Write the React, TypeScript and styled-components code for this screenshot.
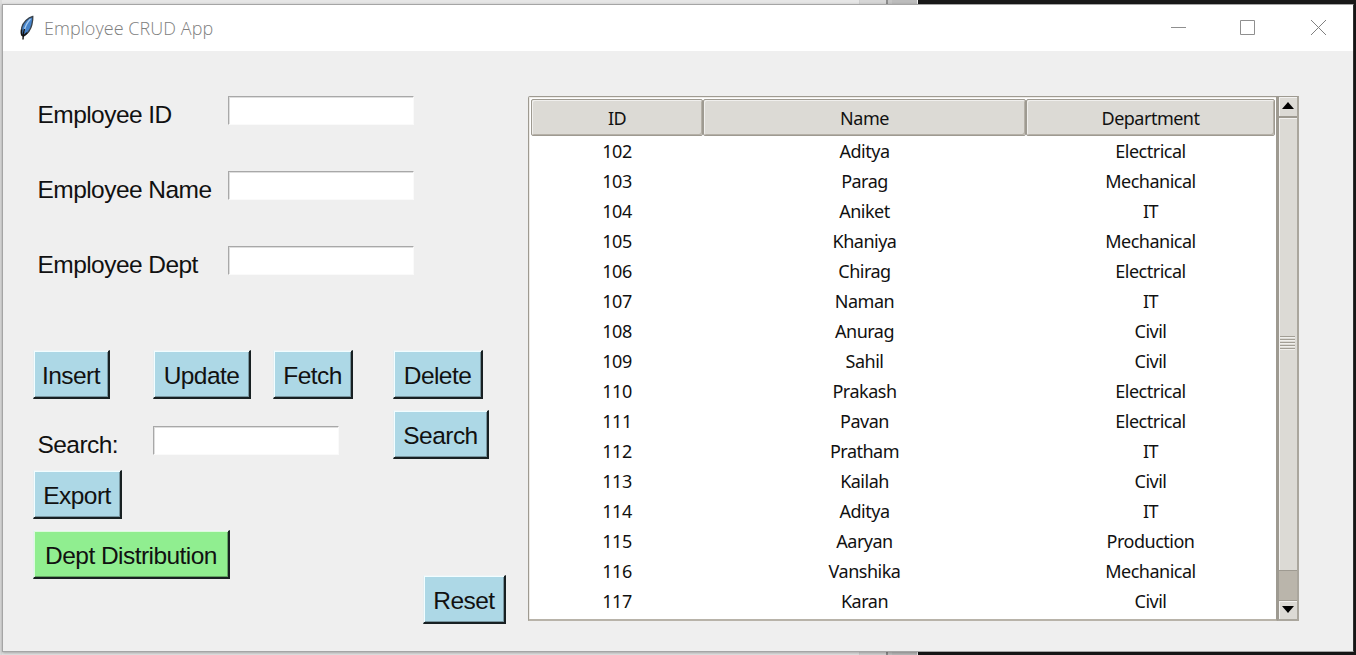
import React from 'react';
import styled, { createGlobalStyle } from 'styled-components';

const GlobalStyle = createGlobalStyle`
  * { box-sizing: border-box; }
  body { margin: 0; overflow: hidden; }
`;

const Desktop = styled.div`
  width: 1356px;
  height: 655px;
  padding: 4px 2px 3px;
  background: linear-gradient(
    90deg,
    #dcdcdc 0 2px, #e6e6e6 2px 859px, #cfcfcf 859px 860px, #d6d6d6 860px 886px,
    #8c8c8c 886px 888px, #c4c4c4 888px 892px, #bcbcbc 892px 917px,
    #f0f0f0 917px 918px, #191919 918px
  );
`;

const Window = styled.main`
  width: 1352px;
  height: 648px;
  display: flex;
  flex-direction: column;
  background: #efefef;
  border: 1px solid #a5a5a5;
  border-right-color: #303030;
  color: #111;
  box-shadow: 0 1px 3px rgba(0, 0, 0, 0.3);
`;

const TitleBar = styled.header`
  height: 46px;
  flex: none;
  display: flex;
  align-items: center;
  justify-content: space-between;
  padding: 0 26px 0 15px;
  background: #fff;
`;

const Brand = styled.div`
  display: flex;
  align-items: center;
  gap: 7px;
`;

const Title = styled.h1`
  margin: 0;
  font: 350 18px/24px "Open Sans", sans-serif;
  letter-spacing: 0.05px;
  color: #808080;
`;

const WindowControls = styled.div`
  display: flex;
  align-items: center;
  gap: 53px;
  svg { display: block; }
  svg:last-child { margin-left: 2px; }
`;

const Content = styled.div`
  flex: 1;
  display: flex;
  align-items: flex-start;
  padding: 45px 0 0 30px;
`;

const Form = styled.section`
  width: 495px;
  flex: none;
  font: 24.5px/28px "Liberation Sans", Arial, sans-serif;
  letter-spacing: -0.55px;
`;

const FieldRow = styled.div`
  display: flex;
  height: 75px;
`;

const Label = styled.label`
  width: 195px;
  padding: 5px 0 0 4.5px;
  white-space: nowrap;
`;

const Entry = styled.input`
  width: 186px;
  height: 29px;
  padding: 0 4px;
  border: 1px solid #fafafa;
  border-top: 1.5px solid #a8a8a8;
  border-left: 1.5px solid #a8a8a8;
  box-shadow: inset 1px 1px 0 #dedede;
  background: #fff;
  font: inherit;
  outline: none;
`;

const ActionGrid = styled.div`
  display: grid;
  grid-template-columns: 120px 120px 120px auto;
  grid-auto-rows: 60px;
  margin-top: 29px;
  align-items: start;
  justify-items: start;
`;

const SearchLabel = styled(Label)`
  width: 120px;
  padding-top: 21px;
`;

const SearchEntry = styled(Entry)`
  grid-column: span 2;
  margin-top: 16px;
`;

const FooterActions = styled.div`
  display: flex;
  align-items: flex-start;
  justify-content: space-between;
  width: 473px;
`;

const Button = styled.button<{ $width: number; $green?: boolean; $drop?: number }>`
  width: ${(p) => p.$width}px;
  height: 49px;
  margin: ${(p) => p.$drop ?? 0}px 0 0;
  padding: 4px 0 0;
  border: solid;
  border-width: 1px 2px 2px 1px;
  border-color: #f0f3f4 #182022 #182022 #e4edf0;
  background: ${(p) => (p.$green ? '#90ee90' : '#add8e6')};
  box-shadow:
    inset 1px 1px 0 ${(p) => (p.$green ? '#ddfbdd' : '#f2fdff')},
    inset -1px -1px 0 ${(p) => (p.$green ? '#63a563' : '#7896a0')};
  color: #111;
  font: inherit;
  letter-spacing: inherit;
  white-space: nowrap;
`;

const TablePane = styled.section`
  display: flex;
  height: 525px;
`;

const Tree = styled.div`
  width: 749px;
  padding: 2px 1px 0 2px;
  overflow: hidden;
  background: #fff;
  border: 1px solid #9e9a91;
  border-bottom: 2px solid #b8b3a9;
  border-radius: 2px 0 0 0;
  box-shadow: inset 1px 1px 0 #eeebe7;
`;

const Table = styled.table`
  width: 744px;
  table-layout: fixed;
  border-collapse: separate;
  border-spacing: 0;
  font: 18px/30px "Noto Sans", sans-serif;
  letter-spacing: -0.5px;
  text-align: center;
`;

const HeaderCell = styled.th<{ $width: number }>`
  width: ${(p) => p.$width}px;
  height: 37px;
  padding: 0;
  font-weight: 400;
  line-height: 32px;
  background: #dcdad5;
  border: 1px solid #9e9a91;
  border-radius: 2px;
  box-shadow: inset 1px 1px 0 #f0efed, inset -1px -1px 0 #b5b0a7;
`;

const Cell = styled.td`
  height: 30px;
  padding: 0;
`;

const Scrollbar = styled.div`
  width: 22px;
  display: flex;
  flex-direction: column;
  background: #bab5ab;
  border: 1px solid #9e9a91;
  border-left-width: 2px;
  border-right: 2px solid #aaa69d;
  border-bottom: 2px solid #aaa69d;
`;

const ScrollPart = styled.div<{ $height: number }>`
  height: ${(p) => p.$height}px;
  display: flex;
  align-items: center;
  justify-content: center;
  padding-bottom: 2px;
  background: #dcdad5;
  box-shadow: inset 1px 1px 0 #f2f1ef;
`;

const Thumb = styled(ScrollPart)`
  border-top: 2px solid #9e9a91;
  border-bottom: 1px solid #9e9a91;
`;

const Trough = styled.div`
  flex: 1;
  border-bottom: 1px solid #9e9a91;
`;

const FeatherIcon = () => (
  <svg width="19" height="26" viewBox="0 0 19 26" fill="none">
    <path d="M14.800 1.500C10 2.500 5 7.500 3.800 12.500c-.5 2.500-.5 5-.2 7l2 1.500c4-2.500 7.200-6.500 8.300-11.500.6-3 1.100-5.500.9-8z" fill="#4583cb" stroke="#39424b" strokeWidth="1.300" />
    <path d="M12.500 4C9 7.500 7 11.500 5.800 17" stroke="#a6caed" strokeWidth="1.300" />
    <path d="M3.600 14.500c-.3 2-.2 4 .2 5.500l1.700 1c1.500-1 2.500-1.800 3.600-3.200" stroke="#151515" strokeWidth="1.500" />
    <path d="M6.500 14c-1 3-1.300 6-1.500 10.500" stroke="#111" strokeWidth="1.400" />
  </svg>
);

const GripIcon = () => (
  <svg width="16" height="16" viewBox="0 0 16 16" shapeRendering="crispEdges">
    {[1, 4, 7, 10, 13].map((y) => (
      <g key={y}>
        <path d={`M0 ${y + 0.5}h15`} stroke="#a29e95" />
        <path d={`M0 ${y + 1.5}h15`} stroke="#f0efec" />
      </g>
    ))}
  </svg>
);

const columns = [
  { name: 'ID', width: 172 },
  { name: 'Name', width: 323 },
  { name: 'Department', width: 249 },
];

const employees: [string, string, string][] = [
  ['102', 'Aditya', 'Electrical'],
  ['103', 'Parag', 'Mechanical'],
  ['104', 'Aniket', 'IT'],
  ['105', 'Khaniya', 'Mechanical'],
  ['106', 'Chirag', 'Electrical'],
  ['107', 'Naman', 'IT'],
  ['108', 'Anurag', 'Civil'],
  ['109', 'Sahil', 'Civil'],
  ['110', 'Prakash', 'Electrical'],
  ['111', 'Pavan', 'Electrical'],
  ['112', 'Pratham', 'IT'],
  ['113', 'Kailah', 'Civil'],
  ['114', 'Aditya', 'IT'],
  ['115', 'Aaryan', 'Production'],
  ['116', 'Vanshika', 'Mechanical'],
  ['117', 'Karan', 'Civil'],
];

export default function App() {
  return (
    <Desktop>
      <GlobalStyle />
      <Window>
        <TitleBar>
          <Brand>
            <FeatherIcon />
            <Title>Employee CRUD App</Title>
          </Brand>
          <WindowControls>
            <svg width="16" height="16"><path d="M0 7.500h15" stroke="#8f8f8f" /></svg>
            <svg width="16" height="16"><path d="M.5.5h14v14H.5z" fill="none" stroke="#8f8f8f" /></svg>
            <svg width="16" height="16"><path d="M0 0l15 15M15 0l-15 15" stroke="#808080" /></svg>
          </WindowControls>
        </TitleBar>
        <Content>
          <Form>
            {['Employee ID', 'Employee Name', 'Employee Dept'].map((name) => (
              <FieldRow key={name}>
                <Label>{name}</Label>
                <Entry aria-label={name} />
              </FieldRow>
            ))}
            <ActionGrid>
              <Button $width={77}>Insert</Button>
              <Button $width={98}>Update</Button>
              <Button $width={80}>Fetch</Button>
              <Button $width={90}>Delete</Button>
              <SearchLabel>Search:</SearchLabel>
              <SearchEntry aria-label="Search" />
              <Button $width={96}>Search</Button>
              <Button $width={89}>Export</Button>
            </ActionGrid>
            <FooterActions>
              <Button $width={197} $green>Dept Distribution</Button>
              <Button $width={83} $drop={45}>Reset</Button>
            </FooterActions>
          </Form>
          <TablePane>
            <Tree>
              <Table>
                <thead>
                  <tr>
                    {columns.map((c) => (
                      <HeaderCell key={c.name} $width={c.width}>{c.name}</HeaderCell>
                    ))}
                  </tr>
                </thead>
                <tbody>
                  {employees.map((row) => (
                    <tr key={row[0]}>
                      {row.map((value, i) => <Cell key={i}>{value}</Cell>)}
                    </tr>
                  ))}
                </tbody>
              </Table>
            </Tree>
            <Scrollbar>
              <ScrollPart $height={19}>
                <svg width="12" height="7"><path d="M0 7L6 0l6 7z" /></svg>
              </ScrollPart>
              <Thumb $height={455}><GripIcon /></Thumb>
              <Trough />
              <ScrollPart $height={18}>
                <svg width="12" height="7"><path d="M0 0h12L6 7z" /></svg>
              </ScrollPart>
            </Scrollbar>
          </TablePane>
        </Content>
      </Window>
    </Desktop>
  );
}
